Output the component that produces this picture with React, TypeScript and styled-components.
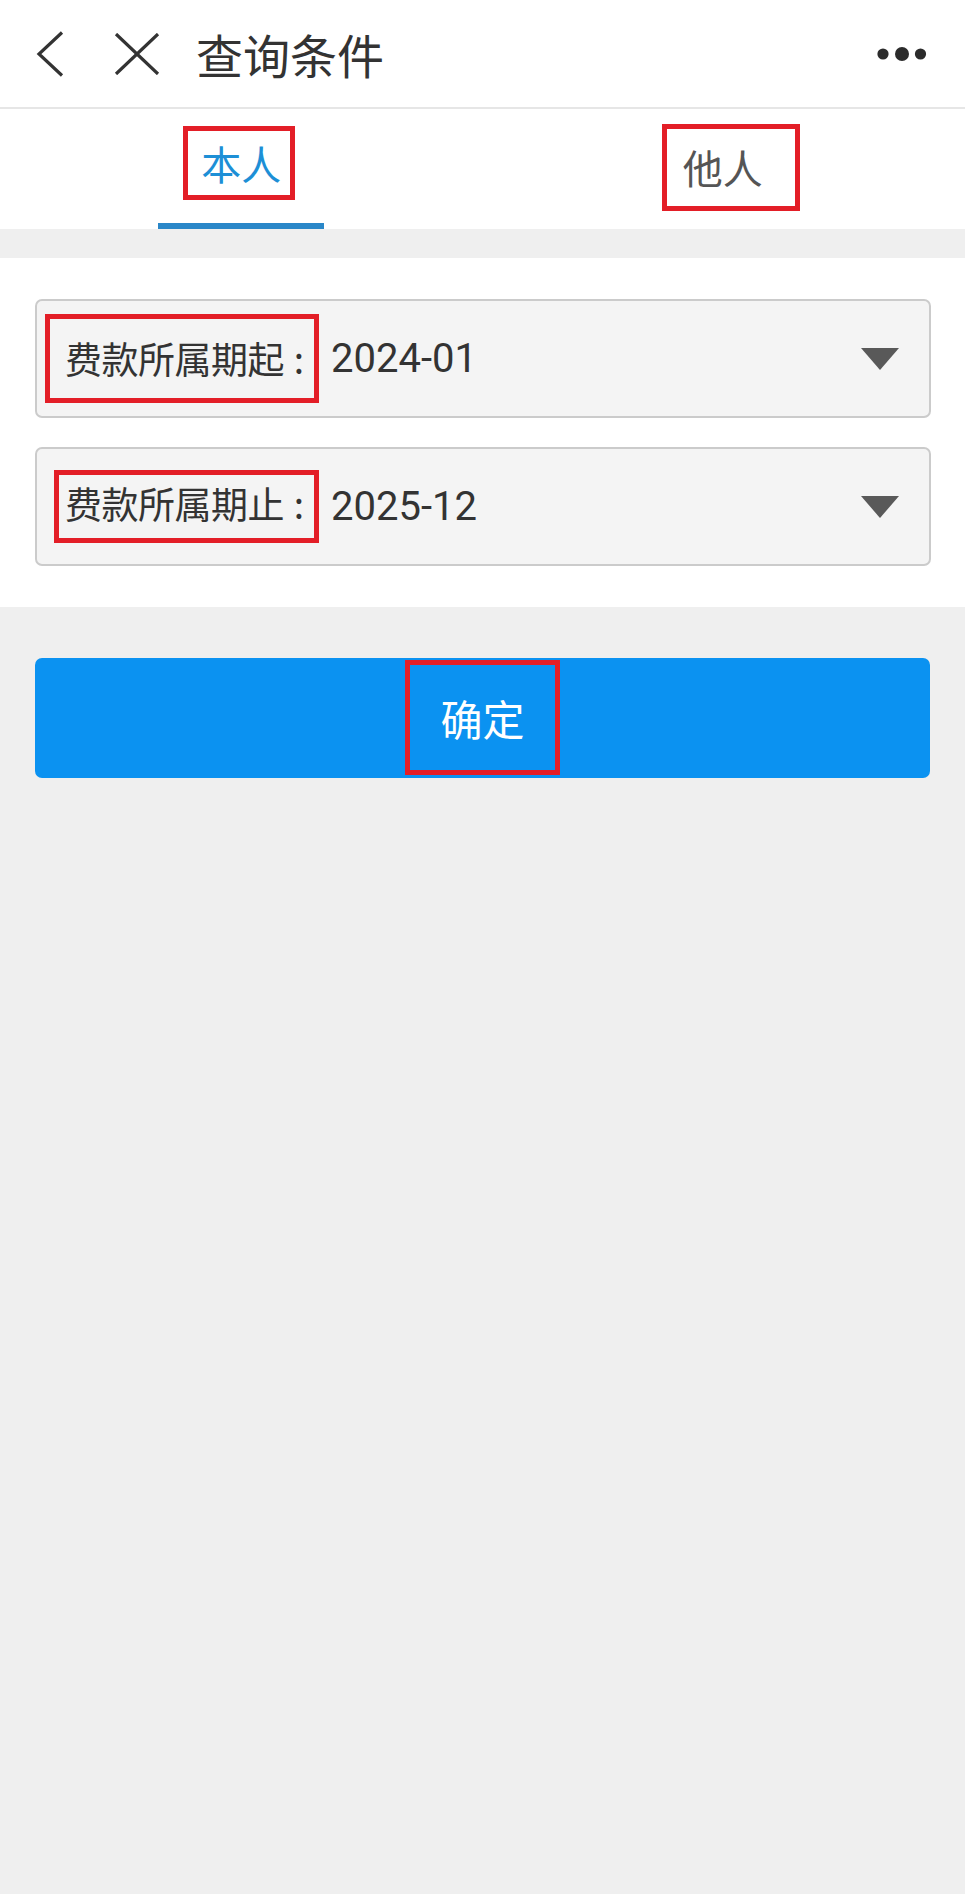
import React, {useState} from 'react';
import styled, {createGlobalStyle} from "styled-components";

const blue = '#1d8fd6';
const red = '#e31e27';

const GlobalStyle = createGlobalStyle`
    html, body {
        margin: 0;
        padding: 0;
        background: #efefef;
    }
    body {
        font-family: Roboto, "Noto Sans CJK SC", sans-serif;
        color: #333;
    }
`

type MarkPT = {
    pl?: number
    pr?: number
    pt?: number
    pb?: number
    ml?: number
}

// red annotation box round a piece of text
const Mark = styled.span<{$pl?: number, $pr?: number, $pt?: number, $pb?: number, $ml?: number}>`
    display: inline-flex;
    align-items: center;
    border: 5px solid ${red};
    padding: ${p => p.$pt ?? 0}px ${p => p.$pr ?? 0}px ${p => p.$pb ?? 0}px ${p => p.$pl ?? 0}px;
    margin-left: ${p => p.$ml ?? 0}px;
    flex-shrink: 0;
`

const Marked = ({children, pl, pr, pt, pb, ml}: MarkPT & {children: React.ReactNode}) => (
    <Mark $pl={pl} $pr={pr} $pt={pt} $pb={pb} $ml={ml}>{children}</Mark>
)

const Page = styled.div`
    min-height: 100vh;
    background: #efefef;
`
const Header = styled.div`
    height: 107px;
    background: #fff;
    border-bottom: 2px solid #e6e6e6;
    display: flex;
    align-items: center;
    padding: 0 38px 0 36px;
`
const HeaderIcon = styled.svg<{$ml?: number}>`
    display: block;
    flex-shrink: 0;
    margin-left: ${p => p.$ml ?? 0}px;
`
const Title = styled.div`
    margin-left: 36px;
    font-size: 47px;
    line-height: 1;
    color: #333;
    font-family: "Noto Sans CJK SC", sans-serif;
`
const More = styled.svg`
    margin-left: auto;
    display: block;
`
const Tabs = styled.div`
    display: grid;
    grid-template-columns: 1fr 1fr;
    background: #fff;
    height: 120px;
    margin-bottom: 29px;
`
const Tab = styled.div<{$active?: boolean, $top: number}>`
    display: flex;
    flex-direction: column;
    align-items: center;
    padding-top: ${p => p.$top}px;
    cursor: pointer;
    font-size: 40px;
    line-height: 1.35;
    color: ${p => p.$active ? blue : '#555'};
    font-family: "Noto Sans CJK SC", sans-serif;
`
const Indicator = styled.div<{$active?: boolean}>`
    margin-top: auto;
    width: 166px;
    height: 6px;
    background: ${p => p.$active ? '#2a87c8' : 'transparent'};
`
const Panel = styled.div`
    background: #fff;
    padding: 41px 34px 41px 35px;
    display: flex;
    flex-direction: column;
    gap: 29px;
`
const Select = styled.div`
    height: 119px;
    box-sizing: border-box;
    border: 2px solid #cbcbcb;
    border-radius: 7px;
    background: #f4f4f4;
    display: flex;
    align-items: center;
    padding-right: 30px;
`
const Label = styled.span`
    font-size: 37px;
    line-height: 1.2;
    color: #333;
    font-family: "Noto Sans CJK SC", sans-serif;
    letter-spacing: -0.5px;
`
const Colon = styled.span`
    display: inline-block;
    width: 30px;
    text-align: center;
    letter-spacing: 0;
`
const Value = styled.span`
    margin-left: 12px;
    font-size: 40px;
    color: #333;
    font-family: Roboto, sans-serif;
`
const Caret = styled.svg`
    margin-left: auto;
    display: block;
`
const Confirm = styled.button`
    display: flex;
    justify-content: center;
    align-items: flex-end;
    margin: 51px 35px 0 35px;
    width: calc(100% - 70px);
    height: 120px;
    box-sizing: border-box;
    border: none;
    border-radius: 7px;
    background: #0b92f1;
    color: #fff;
    padding: 0 0 3px;
    font-size: 42px;
    font-family: "Noto Sans CJK SC", sans-serif;
    cursor: pointer;
`

const periods = [
    {label: '费款所属期起', value: '2024-01', ml: 8, pl: 15, pr: 0, pt: 17, pb: 18},
    {label: '费款所属期止', value: '2025-12', ml: 17, pl: 6, pr: 0, pt: 6, pb: 12},
]

export default function App() {
    const [tab, setTab] = useState(0)
    return (
        <Page>
            <GlobalStyle/>
            <Header>
                <HeaderIcon width="28" height="46" viewBox="0 0 28 46">
                    <path d="M26 1.5 L3 23 L26 44.5" fill="none" stroke="#333" strokeWidth="3.2"/>
                </HeaderIcon>
                <HeaderIcon $ml={50} width="46" height="42" viewBox="0 0 46 42">
                    <path d="M2 1 L44 41 M44 1 L2 41" fill="none" stroke="#333" strokeWidth="3.2"/>
                </HeaderIcon>
                <Title>查询条件</Title>
                <More width="50" height="16" viewBox="0 0 50 16">
                    <circle cx="6" cy="8" r="5.6" fill="#2b2b2b"/>
                    <circle cx="25" cy="8" r="7" fill="#2b2b2b"/>
                    <circle cx="43.5" cy="8" r="5.6" fill="#2b2b2b"/>
                </More>
            </Header>
            <Tabs>
                <Tab $active={tab === 0} $top={17} onClick={() => setTab(0)}>
                    <Marked pl={13} pr={9} pt={5} pb={5} ml={-4}>本人</Marked>
                    <Indicator $active={tab === 0}/>
                </Tab>
                <Tab $active={tab === 1} $top={15} onClick={() => setTab(1)}>
                    <Marked pl={16} pr={32} pt={11} pb={12} ml={14}>他人</Marked>
                    <Indicator $active={tab === 1}/>
                </Tab>
            </Tabs>
            <Panel>
                {periods.map(p => (
                    <Select key={p.label}>
                        <Marked ml={p.ml} pl={p.pl} pr={p.pr} pt={p.pt} pb={p.pb}>
                            <Label>{p.label}<Colon>:</Colon></Label>
                        </Marked>
                        <Value>{p.value}</Value>
                        <Caret width="38" height="22" viewBox="0 0 38 22">
                            <path d="M0 0 H38 L19 22 Z" fill="#595959"/>
                        </Caret>
                    </Select>
                ))}
            </Panel>
            <Confirm>
                <Marked pl={30} pr={30} pt={22} pb={22}>确定</Marked>
            </Confirm>
        </Page>
    )
}
